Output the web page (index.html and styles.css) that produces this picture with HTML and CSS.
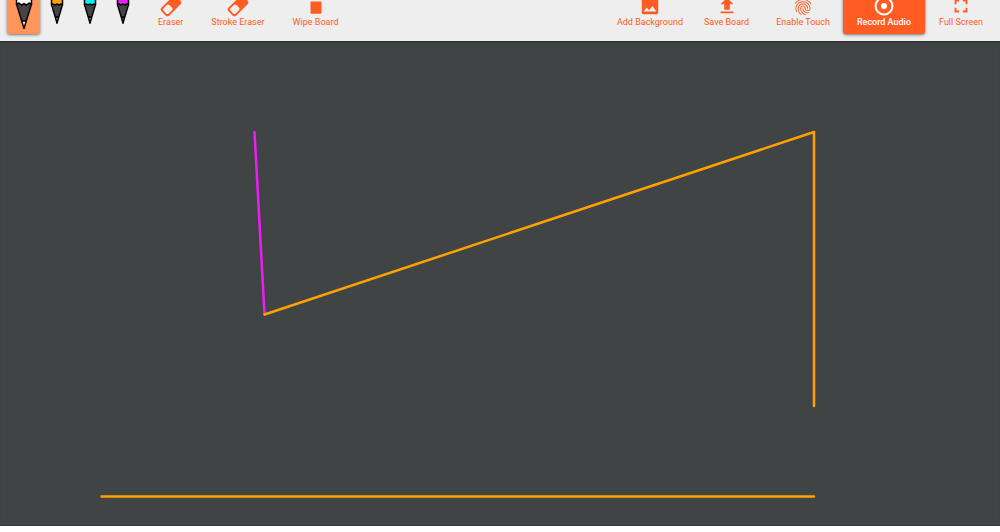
FILE: index.html
```html
<!DOCTYPE html>
<html lang="en">
<head>
<meta charset="utf-8">
<meta name="viewport" content="width=device-width, initial-scale=1">
<title>Whiteboard</title>
<link rel="stylesheet" href="styles.css">
</head>
<body>
<header class="toolbar">
  <div class="pens">
    <button class="pen pen-active" type="button" aria-label="White pen">
      <svg class="pen-large" viewBox="0 0 18 40"><path class="pen-lead" d="M2 15L9 39L16 15Z"/><path fill="#fff" d="M7 32L9 38.500L11 32Z"/><path class="pen-body" fill="#fff" d="M1.500 0V15L4 14L6.500 16L9 14.500L11.500 16L14 14L16.500 15V0"/><path class="pen-edge" d="M1.500 15L9 39.500L16.500 15M7 32H11"/></svg>
    </button>
    <button class="pen" type="button" aria-label="Orange pen">
      <svg class="pen-small" viewBox="0 0 14 35"><path class="pen-lead" d="M2 15L7 34L12 15Z"/><path fill="#ffa200" d="M5 29L7 33L9 29Z"/><path class="pen-body" fill="#ffa200" d="M1.500 0V15.500L3 15L5 16L7 15L9 16L11 15L12.500 15.500V0"/><path class="pen-edge" d="M1.500 15.500L7 34L12.500 15.500M5.500 28H8.500"/></svg>
    </button>
    <button class="pen" type="button" aria-label="Cyan pen">
      <svg class="pen-small" viewBox="0 0 14 35"><path class="pen-lead" d="M2 15L7 34L12 15Z"/><path fill="#00f5f5" d="M5 29L7 33L9 29Z"/><path class="pen-body" fill="#00f5f5" d="M1.500 0V15.500L3 15L5 16L7 15L9 16L11 15L12.500 15.500V0"/><path class="pen-edge" d="M1.500 15.500L7 34L12.500 15.500M5.500 28H8.500"/></svg>
    </button>
    <button class="pen" type="button" aria-label="Magenta pen">
      <svg class="pen-small" viewBox="0 0 14 35"><path class="pen-lead" d="M2 15L7 34L12 15Z"/><path fill="#ee1cf5" d="M5 29L7 33L9 29Z"/><path class="pen-body" fill="#ee1cf5" d="M1.500 0V15.500L3 15L5 16L7 15L9 16L11 15L12.500 15.500V0"/><path class="pen-edge" d="M1.500 15.500L7 34L12.500 15.500M5.500 28H8.500"/></svg>
    </button>
  </div>
  <div class="group group-erase">
    <button class="tool" type="button">
      <svg class="icon" viewBox="0 0 24 24"><g transform="rotate(-45 12 12)"><rect x="0.500" y="6" width="23" height="12" rx="3" fill="currentColor"/><rect x="2.500" y="8" width="9" height="8" rx="2" fill="#eee"/></g></svg>
      <span>Eraser</span>
    </button>
    <button class="tool" type="button">
      <svg class="icon" viewBox="0 0 24 24"><g transform="rotate(-45 12 12)"><rect x="0.500" y="6" width="23" height="12" rx="3" fill="currentColor"/><rect x="2.500" y="8" width="9" height="8" rx="2" fill="#eee"/></g></svg>
      <span>Stroke Eraser</span>
    </button>
    <button class="tool" type="button">
      <svg class="icon" viewBox="0 0 24 24"><rect x="6" y="7" width="12" height="13.500" rx="1" fill="currentColor"/></svg>
      <span>Wipe Board</span>
    </button>
  </div>
  <div class="group group-board">
    <button class="tool tool-background" type="button">
      <svg class="icon" viewBox="0 0 24 24"><path fill="currentColor" d="M21 19V5c0-1.100-.9-2-2-2H5c-1.100 0-2 .9-2 2v14c0 1.100.9 2 2 2h14c1.100 0 2-.9 2-2zM8.500 13.500l2.500 3.010L14.500 12l4.500 6H5l3.500-4.500z"/></svg>
      <span>Add Background</span>
    </button>
    <button class="tool" type="button">
      <svg class="icon" viewBox="0 0 24 24"><path fill="currentColor" d="M9 16h6v-6h4l-7-7-7 7h4zm-4 2h14v2H5z"/></svg>
      <span>Save Board</span>
    </button>
    <button class="tool tool-touch" type="button">
      <svg class="icon" viewBox="0 0 24 24"><path fill="currentColor" d="M17.810 4.470c-.08 0-.16-.02-.23-.06C15.660 3.420 14 3 12.010 3c-1.980 0-3.860.47-5.570 1.410-.24.13-.54.04-.68-.2-.13-.24-.04-.55.2-.68C7.820 2.520 9.860 2 12.010 2c2.130 0 3.990.47 6.030 1.520.25.13.34.43.21.67-.09.18-.26.28-.44.28zM3.500 9.720c-.1 0-.2-.03-.29-.09-.23-.16-.28-.47-.12-.7.99-1.400 2.250-2.500 3.750-3.270C9.980 4.040 14 4.030 17.150 5.650c1.500.77 2.760 1.860 3.750 3.250.16.22.11.54-.12.7-.23.16-.54.11-.7-.12-.9-1.260-2.040-2.250-3.390-2.940-2.870-1.470-6.540-1.470-9.400.01-1.360.7-2.500 1.700-3.400 2.960-.08.14-.23.21-.39.21zm6.250 12.070c-.13 0-.26-.05-.35-.15-.87-.87-1.340-1.430-2.010-2.640-.69-1.230-1.050-2.730-1.050-4.340 0-2.970 2.540-5.390 5.660-5.390s5.660 2.420 5.660 5.390c0 .28-.22.5-.5.5s-.5-.22-.5-.5c0-2.420-2.090-4.390-4.660-4.390-2.570 0-4.660 1.970-4.660 4.390 0 1.440.32 2.770.93 3.850.64 1.150 1.080 1.640 1.850 2.420.19.2.19.51 0 .71-.11.1-.24.15-.37.15zm7.170-1.850c-1.190 0-2.240-.3-3.100-.89-1.490-1.010-2.380-2.650-2.380-4.390 0-.28.22-.5.5-.5s.5.22.5.5c0 1.410.72 2.740 1.940 3.560.71.48 1.540.71 2.540.71.24 0 .64-.03 1.040-.1.27-.05.53.13.58.41.05.27-.13.53-.41.58-.57.11-1.070.12-1.210.12zM14.910 22c-.04 0-.09-.01-.13-.02-1.590-.44-2.630-1.030-3.720-2.100-1.400-1.390-2.170-3.240-2.170-5.220 0-1.620 1.380-2.940 3.080-2.940 1.700 0 3.080 1.320 3.080 2.940 0 1.070.93 1.940 2.080 1.940s2.080-.87 2.080-1.940c0-3.770-3.250-6.830-7.250-6.830-2.840 0-5.440 1.580-6.610 4.030-.39.81-.59 1.760-.59 2.800 0 .78.07 2.010.67 3.610.1.26-.03.55-.29.64-.26.1-.55-.04-.64-.29-.49-1.310-.73-2.610-.73-3.960 0-1.200.23-2.290.68-3.240 1.330-2.790 4.280-4.600 7.510-4.600 4.550 0 8.250 3.510 8.250 7.830 0 1.620-1.380 2.940-3.080 2.940s-3.080-1.320-3.080-2.940c0-1.070-.93-1.940-2.080-1.940s-2.080.87-2.080 1.940c0 1.710.66 3.310 1.870 4.510.95.94 1.860 1.460 3.270 1.850.27.07.42.35.35.61-.05.23-.26.38-.47.38z"/></svg>
      <span>Enable Touch</span>
    </button>
    <button class="tool tool-record" type="button">
      <svg class="icon" viewBox="0 0 24 24"><circle cx="12" cy="12" r="9.200" fill="none" stroke="currentColor" stroke-width="2.200"/><circle cx="12" cy="12" r="3.300" fill="currentColor"/></svg>
      <span>Record Audio</span>
    </button>
    <button class="tool" type="button">
      <svg class="icon" viewBox="0 0 24 24"><path fill="currentColor" d="M7 14H5v5h5v-2H7v-3zm-2-4h2V7h3V5H5v5zm12 7h-3v2h5v-5h-2v3zM14 5v2h3v3h2V5h-5z"/></svg>
      <span>Full Screen</span>
    </button>
  </div>
</header>
<main class="board">
  <svg class="drawing" viewBox="0 0 1000 484" preserveAspectRatio="xMinYMin meet" role="img" aria-label="Board drawing">
    <path stroke="#ee1cf5" d="M254.500 91L264.500 273"/>
    <path stroke="#ffa200" d="M264.500 273.500L814 91V365M101.500 455.500H814"/>
  </svg>
</main>
</body>
</html>
```
FILE: styles.css
```css
* {
  box-sizing: border-box;
}

body {
  margin: 0;
  min-height: 100vh;
  padding-bottom: 6px;
  display: flex;
  flex-direction: column;
  background: #fff;
  font-family: Roboto, "Liberation Sans", sans-serif;
}

.toolbar {
  display: flex;
  align-items: flex-end;
  flex: none;
  height: 41px;
  padding: 0 3px 7px 7px;
  overflow: hidden;
  background: #eee;
}

.pens,
.group {
  display: flex;
  align-items: flex-end;
}

.group-erase {
  margin-left: 5px;
}

.group-board {
  margin-left: auto;
}

.pen,
.tool {
  margin: 0;
  border: 0;
  border-radius: 3px;
  background: transparent;
  font: inherit;
  cursor: pointer;
}

.pen {
  display: flex;
  justify-content: center;
  align-items: flex-start;
  width: 33px;
  height: 48px;
  padding: 3px 0 0;
}

.pen-active {
  background: #ff9558;
  box-shadow: 0 1px 3px rgba(0, 0, 0, 0.5);
}

.pen-large {
  width: 18px;
  height: 40px;
}

.pen-small {
  width: 14px;
  height: 35px;
}

.pen-lead {
  fill: #444;
}

.pen-body {
  stroke: #000;
  stroke-width: 1.5;
}

.pen-edge {
  fill: none;
  stroke: #000;
  stroke-width: 1.5;
}

.tool {
  display: flex;
  flex-direction: column;
  align-items: center;
  padding: 6px 14px 7px;
  color: #ff5b22;
  font-size: 9px;
  line-height: 10px;
  white-space: nowrap;
}

.tool-background {
  padding-right: 7px;
}

.tool-touch {
  padding-left: 13px;
  padding-right: 13px;
}

.icon {
  width: 22px;
  height: 22px;
}

.tool-record {
  background: #ff5b22;
  color: #fff;
  font-weight: 500;
  box-shadow: 0 1px 3px rgba(0, 0, 0, 0.5);
}

.board {
  flex: 1;
  background: #404444;
  border-bottom: 1px solid #383b3b;
  box-shadow: inset 0 2px 2px -1px #2c2f2f;
}

.drawing {
  display: block;
  width: 100%;
  fill: none;
  stroke-width: 2.5;
  stroke-linecap: round;
  stroke-linejoin: round;
}
```
